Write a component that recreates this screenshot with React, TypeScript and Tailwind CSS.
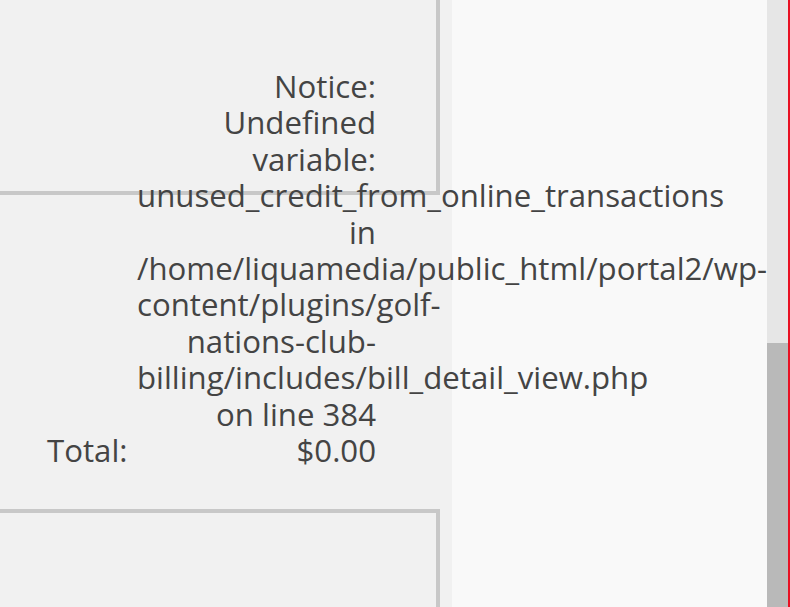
export default function App() {
  const notice =
    "Notice: Undefined variable: unused_credit_from_online_transactions in /home/liquamedia/public_html/portal2/wp-content/plugins/golf-nations-club-billing/includes/bill_detail_view.php on line 384";

  return (
    <div className="flex h-[607px] w-[790px] overflow-hidden font-['Open_Sans',sans-serif] text-[#444]">
      {/* Main column */}
      <div className="flex w-[452px] shrink-0 flex-col bg-[#f1f1f1]">
        <div className="h-[195px] w-[440px] shrink-0 border-b-4 border-r-4 border-[#c8c8c8]" />

        <div className="relative z-10 -mt-[127px] flex items-end pl-[47px] text-[31.2px] leading-[36.4px]">
          <span className="w-[90px] shrink-0">Total:</span>
          <div className="w-[239px] shrink-0 text-right">
            <div>{notice}</div>
            <div>$0.00</div>
          </div>
        </div>

        <div className="mt-[41px] w-[440px] flex-1 border-r-4 border-t-4 border-[#c8c8c8]" />
      </div>

      {/* Side area */}
      <div className="flex-1 bg-[#f9f9f9]" />

      {/* Scrollbar */}
      <div className="flex w-[21px] shrink-0 flex-col">
        <div className="h-[343px] bg-[#e6e6e6]" />
        <div className="flex-1 bg-[#b9b9b9]" />
      </div>
      <div className="w-[2px] shrink-0 bg-[#e81123]" />
    </div>
  );
}
